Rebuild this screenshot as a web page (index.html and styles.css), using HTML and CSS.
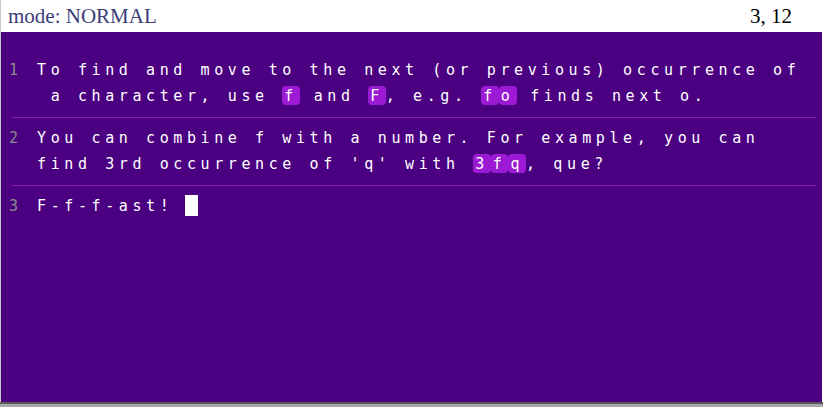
FILE: index.html
```html
<!DOCTYPE html>
<html>
<head>
<meta charset="utf-8">
<link rel="stylesheet" href="styles.css">
</head>
<body>
<div class="app">
  <div class="status">
    <span class="mode">mode: NORMAL</span>
    <span class="pos">3, 12</span>
  </div>
  <div class="editor">
    <div class="para">
      <span class="num">1</span>
      <div class="text">
        <div class="line">To find and move to the next (or previous) occurrence of</div>
        <div class="line"> a character, use <span class="hl">f</span> and <span class="hl">F</span>, e.g. <span class="hl">f</span><span class="hl">o</span> finds next o.</div>
      </div>
    </div>
    <div class="sep"></div>
    <div class="para">
      <span class="num">2</span>
      <div class="text">
        <div class="line">You can combine f with a number. For example, you can</div>
        <div class="line">find 3rd occurrence of 'q' with <span class="hl">3</span><span class="hl">f</span><span class="hl">q</span>, que?</div>
      </div>
    </div>
    <div class="sep"></div>
    <div class="para">
      <span class="num">3</span>
      <div class="text">
        <div class="line">F-f-f-ast! <span class="cursor"></span></div>
      </div>
    </div>
  </div>
  <div class="bottom"></div>
</div>
</body>
</html>
```
FILE: styles.css
```css
html, body {
  margin: 0;
  padding: 0;
  background: #ffffff;
}
.app {
  width: 823px;
  height: 407px;
  display: flex;
  flex-direction: column;
}
.status {
  height: 32px;
  display: flex;
  justify-content: space-between;
  align-items: center;
  padding: 0 31px 0 7px;
  font-family: "Liberation Serif", serif;
  font-size: 21px;
  border-left: 1px solid #c8c8c8;
  box-sizing: border-box;
}
.mode { color: #3c3c78; }
.pos { color: #000; }
.editor {
  flex: 1;
  background: #4b0082;
  border-left: 1px solid #c8c8c8;
  margin-right: 1px;
  padding-top: 18px;
  font-family: "DejaVu Sans Mono", monospace;
  font-size: 15px;
  color: #ffffff;
}
.para {
  display: flex;
  padding: 7px 0 8px 0;
}
.num {
  width: 36px;
  padding-left: 8px;
  box-sizing: border-box;
  color: #8c8c8c;
  line-height: 26px;
}
.text {
  letter-spacing: 4.6px;
}
.line {
  height: 26px;
  line-height: 26px;
  white-space: pre;
}
.hl {
  background: #9c1ad6;
  border-radius: 4px;
  padding: 1px 2px 0 2px;
}
.cursor {
  display: inline-block;
  width: 13px;
  height: 21px;
  background: #ffffff;
  vertical-align: -5px;
  margin-left: -2px;
}
.sep {
  height: 1px;
  background: #8e1a9e;
  margin: 0 6px 0 11px;
}
.bottom {
  height: 5px;
  border-top: 2px solid #5a5a5a;
  background: #a8a8a8;
  box-sizing: border-box;
}
```
